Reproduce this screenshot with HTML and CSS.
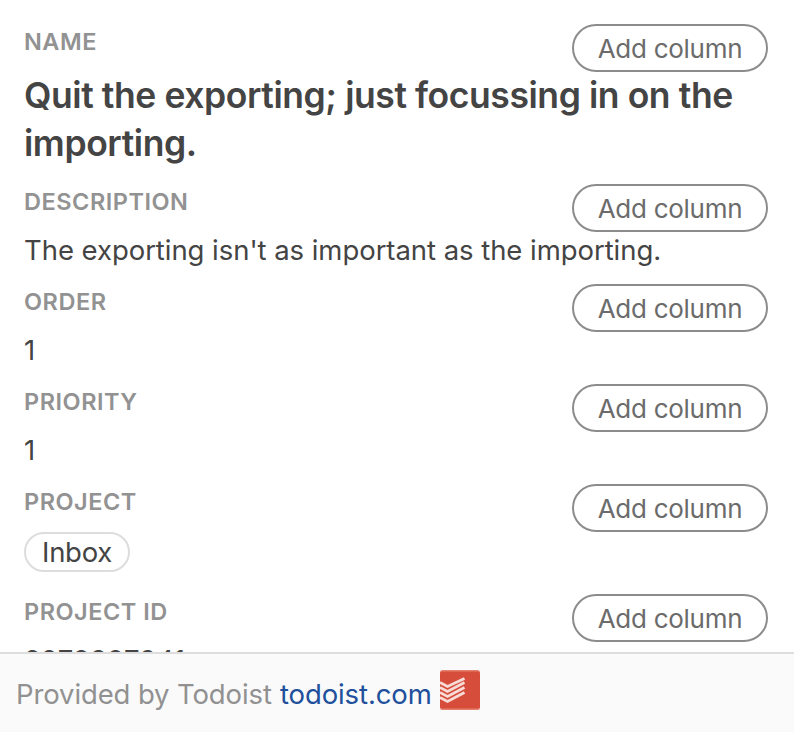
FILE: index.html
```html
<!DOCTYPE html>
<html lang="en">
<head>
<meta charset="utf-8">
<title>Todoist item</title>
<link rel="stylesheet" href="styles.css">
</head>
<body>
<main class="fields">
  <section class="field">
    <header class="field-head"><h2 class="label">NAME</h2><button class="add">Add column</button></header>
    <p class="title">Quit the exporting; just focussing in on the importing.</p>
  </section>
  <section class="field">
    <header class="field-head"><h2 class="label">DESCRIPTION</h2><button class="add">Add column</button></header>
    <p class="value">The exporting isn't as important as the importing.</p>
  </section>
  <section class="field">
    <header class="field-head"><h2 class="label">ORDER</h2><button class="add">Add column</button></header>
    <p class="value">1</p>
  </section>
  <section class="field">
    <header class="field-head"><h2 class="label">PRIORITY</h2><button class="add">Add column</button></header>
    <p class="value">1</p>
  </section>
  <section class="field field-tags">
    <header class="field-head"><h2 class="label">PROJECT</h2><button class="add">Add column</button></header>
    <span class="tag">Inbox</span>
  </section>
  <section class="field">
    <header class="field-head"><h2 class="label">PROJECT ID</h2><button class="add">Add column</button></header>
    <p class="value value-id">2278387941</p>
  </section>
</main>
<footer class="footer">
  <span class="provider">Provided by Todoist</span>
  <a class="link">todoist.com</a>
  <svg class="logo" viewBox="0 0 40 40" aria-hidden="true">
    <rect width="40" height="40" rx="2.5" fill="#e5806f"/>
    <rect y="1.5" width="40" height="37" rx="2" fill="#d64d3b"/>
    <g fill="none" stroke="#f8dcd7" stroke-width="2.7">
      <path d="M0 12.5 L7.5 16.5 L24.5 8.5"/>
      <path d="M0 17.5 L7.5 21.5 L24.5 12.5"/>
      <path d="M0 22.5 L7.5 26.5 L24.5 17.5"/>
      <path d="M0 27.5 L7.5 31.5 L24.5 22.5"/>
    </g>
  </svg>
</footer>
</body>
</html>
```

FILE: styles.css
```css
* { box-sizing: border-box; }
body {
  margin: 0;
  height: 732px;
  display: flex;
  flex-direction: column;
  overflow: hidden;
  background: #fff;
  color: #444;
  font-family: Inter, "Liberation Sans", sans-serif;
}
h2, p { margin: 0; }
.fields { flex: 1; min-height: 0; overflow: hidden; padding: 24px 26px 0 24px; }
.field { margin-bottom: 16px; }
.field-tags { margin-bottom: 22px; }
.field-head { display: flex; justify-content: space-between; align-items: flex-start; height: 48px; }
.label { font-size: 23.5px; line-height: 36px; font-weight: 600; color: #929292; letter-spacing: 0.52px; }
.add {
  width: 196px;
  height: 48px;
  padding: 2px 0 0;
  border: 2px solid #8c8c8c;
  border-radius: 24px;
  background: #fff;
  color: #6b6b6b;
  font: 400 26px/42px Inter, "Liberation Sans", sans-serif;
  letter-spacing: -0.27px;
  white-space: nowrap;
}
.title { font-size: 35.5px; line-height: 48px; font-weight: 600; letter-spacing: -0.42px; }
.value { font-size: 27.5px; line-height: 36px; letter-spacing: -0.05px; white-space: nowrap; }
.value-id { letter-spacing: 0.05px; }
.tag {
  display: flex;
  align-items: center;
  justify-content: center;
  width: 106px;
  height: 40px;
  border: 2px solid #ddd;
  border-radius: 20px;
  font-size: 27.5px;
  letter-spacing: -0.3px;
}
.footer {
  display: flex;
  height: 80px;
  padding: 16px;
  border-top: 2px solid #ddd;
  background: #fafafa;
  color: #919191;
  font-size: 27.5px;
  line-height: 48px;
  letter-spacing: -0.12px;
  white-space: nowrap;
}
.provider { width: 264px; }
.link { width: 160px; color: #20509b; }
.logo { width: 40px; height: 40px; }
```
